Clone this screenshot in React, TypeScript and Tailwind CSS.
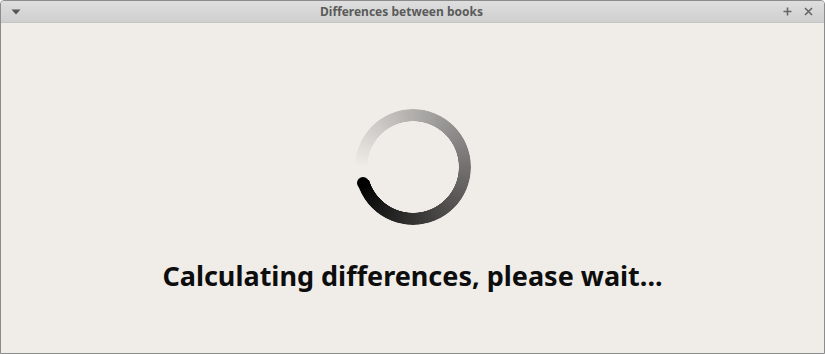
import React from 'react';

const Spinner: React.FC = () => {
  return (
    <div className="relative h-[116px] w-[116px]">
      <div className="h-full w-full rounded-full bg-[conic-gradient(from_270deg,rgba(0,0,0,0)_0deg,rgba(0,0,0,1)_344deg,rgba(0,0,0,0)_344deg)] [mask:radial-gradient(circle,transparent_45.5px,#000_46px)]" />
      {/* rounded head of the arc */}
      <div className="absolute left-[2px] top-[68px] h-[12px] w-[12px] rounded-full bg-black" />
    </div>
  );
};

const App: React.FC = () => {
  return (
    <div className="flex h-[354px] w-[825px] flex-col overflow-hidden rounded-t-[4px] border border-[#8c8c8c] bg-[#f0ede9] font-['Noto_Sans',sans-serif]">
      <div className="flex h-[22px] items-center border-b border-[#c4c4c4] bg-gradient-to-b from-[#dedede] to-[#cfcfcf] px-[10px]">
        <div className="flex w-[40px] items-center">
          <svg width="10" height="6" viewBox="0 0 10 6">
            <path d="M0.5 0.5 L9.5 0.5 L5 5.5 Z" fill="#555" />
          </svg>
        </div>
        <div className="flex-1 text-center text-[12px] font-bold text-[#5a5a5a]">Differences between books</div>
        <div className="flex w-[62px] items-center justify-end gap-[12px] pr-[1px]">
          <svg width="9" height="9" viewBox="0 0 9 9">
            <path d="M4.5 0.5 V8.5 M0.5 4.5 H8.5" stroke="#666" strokeWidth="1.6" />
          </svg>
          <svg width="9" height="9" viewBox="0 0 9 9">
            <path d="M1 1 L8 8 M8 1 L1 8" stroke="#666" strokeWidth="1.6" />
          </svg>
        </div>
      </div>
      <div className="flex flex-1 flex-col items-center pt-[86px]">
        <Spinner />
        <div className="mt-[37px] text-[27px] font-bold leading-none text-[#0d0d0d]">
          Calculating differences, please wait...
        </div>
      </div>
    </div>
  );
};

export default App;
